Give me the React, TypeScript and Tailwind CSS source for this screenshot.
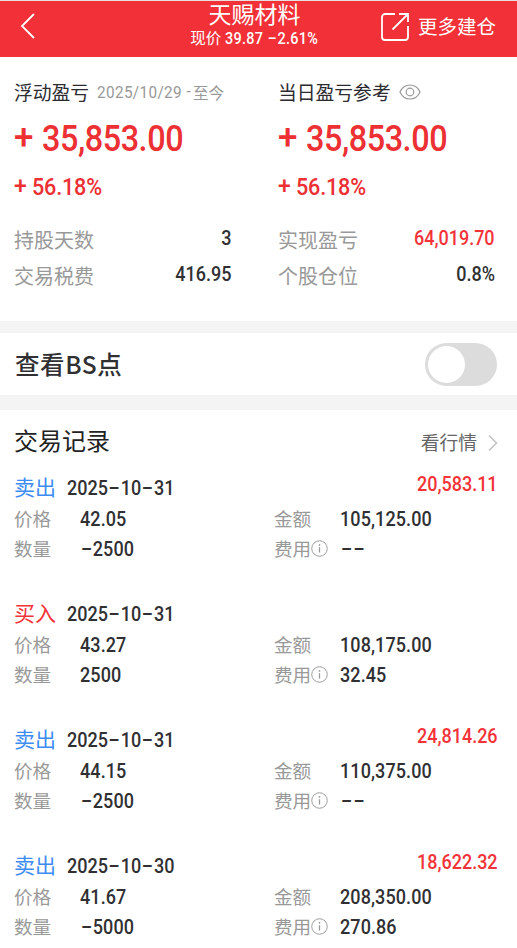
import React, { useState } from "react";

interface TradeRecord {
    id: number;
    type: "buy" | "sell";
    date: string;
    price: string;
    quantity: string;
    amount: string;
    fee: string;
    profit?: string;
}

const records: TradeRecord[] = [
    { id: 1, type: "sell", date: "2025-10-31", price: "42.05", quantity: "-2500", amount: "105,125.00", fee: "--", profit: "20,583.11" },
    { id: 2, type: "buy", date: "2025-10-31", price: "43.27", quantity: "2500", amount: "108,175.00", fee: "32.45" },
    { id: 3, type: "sell", date: "2025-10-31", price: "44.15", quantity: "-2500", amount: "110,375.00", fee: "--", profit: "24,814.26" },
    { id: 4, type: "sell", date: "2025-10-30", price: "41.67", quantity: "-5000", amount: "208,350.00", fee: "270.86", profit: "18,622.32" },
];

// Figures are narrowed a little, with dashes wider than a digit
const Num = ({ value, className = "origin-left" }: { value: string; className?: string }) => (
    <span className={`inline-block scale-x-90 font-[Roboto,sans-serif] whitespace-pre ${className}`}>
        {value.split(/(-)/).map((part, i) =>
            part === "-" ? (
                <span key={i} className="inline-block w-[0.71em] text-center">
                    <span className="inline-block -translate-y-px scale-x-[1.85]">-</span>
                </span>
            ) : (
                part
            )
        )}
    </span>
);

const InfoIcon = () => (
    <svg width="17" height="17" viewBox="0 0 16 16" fill="none" stroke="#999" className="mt-0.5 shrink-0">
        <circle cx="8" cy="8" r="7.3" strokeWidth="0.9" />
        <path d="M8 6.8v5" strokeWidth="1.2" />
        <path d="M8 3.9v1.5" strokeWidth="1.4" />
    </svg>
);

const Summary = ({ title, extra, rows }: { title: string; extra: React.ReactNode; rows: { label: string; value: string; red?: boolean }[] }) => (
    <div className="w-[217px]">
        <div className="flex h-6 items-center whitespace-nowrap">
            <span className="text-[18.8px] text-[#2b2b30]">{title}</span>
            {extra}
        </div>
        <div className="mt-[14px] flex h-10 items-center text-[36px] font-medium text-[#ec3034]">
            <span className="w-[28px] font-[Roboto,sans-serif] text-[35px]">+</span>
            <Num value="35,853.00" className="origin-left pt-px tracking-[-0.5px]" />
        </div>
        <div className="mt-[15px] flex h-[30px] items-center text-[24px] font-medium text-[#ec3034]">
            <span className="w-[18px] pb-0.5 font-[Roboto,sans-serif] text-[23px]">+</span>
            <Num value="56.18%" className="origin-left pb-0.5 tracking-[-0.2px]" />
        </div>
        <div className="mt-[19px]">
            {rows.map((row) => (
                <div key={row.label} className="flex h-9 items-center justify-between">
                    <span className="text-[20px] text-[#999]">{row.label}</span>
                    <Num value={row.value} className={`origin-right pb-1 text-[20px] font-medium ${row.red ? "text-[#f33338]" : "text-[#303033]"}`} />
                </div>
            ))}
        </div>
    </div>
);

const Field = ({ label, value, info }: { label: string; value: string; info?: boolean }) => (
    <div className="flex h-[30px] items-center">
        <div className="flex w-[66px] items-center">
            <span className="text-[18.6px] text-[#999]">{label}</span>
            {info && <InfoIcon />}
        </div>
        <Num value={value} className="origin-left pt-px text-[20px] font-medium tracking-[0.1px] text-[#303033]" />
    </div>
);

const RecordItem = ({ record }: { record: TradeRecord }) => (
    <div className="h-[126px]">
        <div className="flex h-8 items-center">
            <span className={`w-[53px] text-[21px] ${record.type === "sell" ? "text-[#3d8cf5]" : "text-[#f33338]"}`}>
                {record.type === "sell" ? "卖出" : "买入"}
            </span>
            <Num value={record.date} className="origin-left pt-px text-[20px] font-medium text-[#303033]" />
            {record.profit && <Num value={record.profit} className="ml-auto origin-right pb-[7px] text-[20px] font-medium text-[#f33338]" />}
        </div>
        <div className="grid grid-cols-[260px_1fr]">
            <Field label="价格" value={record.price} />
            <Field label="金额" value={record.amount} />
            <Field label="数量" value={record.quantity} />
            <Field label="费用" value={record.fee} info />
        </div>
    </div>
);

const App = () => {
    const [showPoints, setShowPoints] = useState(false);

    return (
        <div className="h-[948px] w-[517px] overflow-hidden bg-white font-['Noto_Sans_CJK_SC',sans-serif]">
            <header className="grid h-[57px] grid-cols-[1fr_140px_1fr] items-start border-t border-[#e8dede] bg-[#f23037] pr-[21px] pl-[19px] text-white">
                <button className="mt-[11px] w-5">
                    <svg width="18" height="28" viewBox="0 0 18 28" fill="none" stroke="white" strokeWidth="1.8">
                        <path d="M15 2L3 14l12 12" />
                    </svg>
                </button>
                <div className="-ml-1.5 pt-px text-center font-['Liberation_Sans','Noto_Sans_CJK_SC',sans-serif] whitespace-nowrap">
                    <h1 className="text-[23px] leading-[26px]">天赐材料</h1>
                    <p className="flex justify-center gap-1 text-[15.5px] leading-[22px]">
                        现价
                        <Num value="39.87 -2.61%" className="-mr-2.5 origin-left text-[16px] font-medium tracking-[0.35px]" />
                    </p>
                </div>
                <button className="mt-[10px] flex items-center justify-end gap-2 whitespace-nowrap">
                    <svg width="30" height="30" viewBox="0 0 30 30" fill="none" stroke="white" strokeWidth="1.8">
                        <path d="M15 3H5a3 3 0 0 0-3 3v20a3 3 0 0 0 3 3h20a3 3 0 0 0 3-3V15" />
                        <path d="M19 3h9v8M28 3L12.500 18.500" />
                    </svg>
                    <span className="text-[19.5px]">更多建仓</span>
                </button>
            </header>

            <section className="flex h-[264px] justify-between pt-[23px] pr-[22px] pl-[14px]">
                <Summary
                    title="浮动盈亏"
                    extra={
                        <span className="ml-2 flex items-center text-[15.6px] text-[#999]">
                            <Num value="2025/10/29" className="-mr-[5px] origin-left pt-0.5 text-[17px] tracking-[0.4px]" />
                            <span className="mr-[3px] pt-0.5 font-[Roboto]">-</span>
                            <span className="-ml-px pt-0.5">至今</span>
                        </span>
                    }
                    rows={[
                        { label: "持股天数", value: "3" },
                        { label: "交易税费", value: "416.95" },
                    ]}
                />
                <Summary
                    title="当日盈亏参考"
                    extra={
                        <svg width="22" height="16" viewBox="0 0 22 16" fill="none" stroke="#999" strokeWidth="1.2" className="ml-2">
                            <path d="M1 8C3 3.5 6.5 1 11 1s8 2.5 10 7c-2 4.500-5.500 7-10 7S3 12.500 1 8z" />
                            <circle cx="11" cy="8" r="3.800" />
                        </svg>
                    }
                    rows={[
                        { label: "实现盈亏", value: "64,019.70", red: true },
                        { label: "个股仓位", value: "0.8%" },
                    ]}
                />
            </section>

            <section className="flex h-[89px] items-center justify-between border-t-[12px] border-b-[15px] border-[#f4f4f4] pr-5 pl-[15px]">
                <span className="text-[24.5px] font-medium tracking-[0.6px] text-[#303033]">查看BS点</span>
                <button
                    role="switch"
                    aria-checked={showPoints}
                    onClick={() => setShowPoints(!showPoints)}
                    className={`flex h-[43px] w-[72px] items-center rounded-full p-[3px] ${showPoints ? "justify-end bg-[#f23037]" : "bg-[#dcdcdc]"}`}
                >
                    <span className="h-[37px] w-[37px] rounded-full bg-white" />
                </button>
            </section>

            <section className="pr-[19px] pl-[14px]">
                <div className="flex h-[61px] items-center justify-between">
                    <h2 className="pb-0.5 text-[24px] text-[#222]">交易记录</h2>
                    <a className="flex items-center gap-[11px] pt-1 text-[18.8px] text-[#666]">
                        看行情
                        <svg width="10" height="18" viewBox="0 0 10 18" fill="none" stroke="#c4c4c4" strokeWidth="1.600">
                            <path d="M1 1.500L8.500 9 1 16.500" />
                        </svg>
                    </a>
                </div>
                {records.map((record) => (
                    <RecordItem key={record.id} record={record} />
                ))}
            </section>
        </div>
    );
};

export default App;
